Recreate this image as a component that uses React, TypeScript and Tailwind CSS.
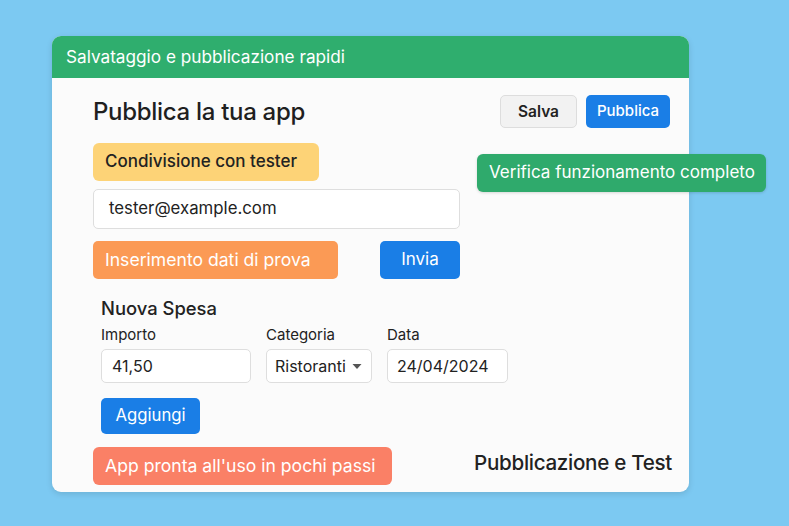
import React from "react";

export default function App() {
  return (
    <div
      className="w-[789px] h-[526px] bg-[#7cc9f2] pt-[36px] pl-[52px] overflow-hidden"
      style={{ fontFamily: "Inter, 'Noto Sans', sans-serif" }}
    >
      <div className="relative w-[637px] h-[456px] rounded-[9px] bg-[#fbfbfb] shadow-[0_2px_6px_rgba(0,0,0,0.12)]">
        <div className="h-[42px] rounded-t-[9px] bg-[#2fae6e] flex items-center pl-[14px] text-white text-[17.2px]">
          Salvataggio e pubblicazione rapidi
        </div>
        <div className="pl-[41px] pr-[19px] pt-[17px]">
          <div className="flex items-center justify-between h-[33px]">
            <div className="text-[24px] font-medium text-[#1f1f1f] tracking-[-0.3px]">Pubblica la tua app</div>
            <div className="flex gap-[9px]">
              <button className="w-[77px] h-[33px] rounded-[5px] bg-[#f2f2f2] border border-[#dddddd] text-[15.5px] font-semibold text-[#222]">
                Salva
              </button>
              <button className="w-[84px] h-[33px] rounded-[5px] bg-[#1a7ee6] text-[15px] font-medium text-white">
                Pubblica
              </button>
            </div>
          </div>
          <div className="mt-[15px] w-[226px] h-[38px] rounded-[6px] bg-[#fdd377] flex items-center pl-[12px] text-[17px] font-medium text-[#222]">
            Condivisione con tester
          </div>
          <div className="mt-[8px] w-[367px] h-[40px] rounded-[5px] bg-white border border-[#dedede] flex items-center pl-[15px] text-[16.8px] text-[#222]">
            tester@example.com
          </div>
          <div className="mt-[12px] flex items-center">
            <div className="w-[245px] h-[38px] rounded-[5px] bg-[#fb9a55] flex items-center pl-[12px] text-[17.6px] text-white">
              Inserimento dati di prova
            </div>
            <button className="ml-[42px] w-[80px] h-[38px] rounded-[5px] bg-[#1a7ee6] text-[17px] text-white">
              Invia
            </button>
          </div>
          <div className="pl-[8px]">
            <div className="mt-[17px] text-[18.4px] font-medium text-[#222] leading-[24px]">Nuova Spesa</div>
            <div className="mt-[6px] flex">
              <div className="w-[165px]">
                <div className="text-[15px] text-[#222] leading-[18px]">Importo</div>
                <div className="mt-[5px] w-[150px] h-[34px] rounded-[5px] bg-white border border-[#dedede] flex items-center pl-[10px] text-[16px] text-[#222]">
                  41,50
                </div>
              </div>
              <div className="w-[121px]">
                <div className="text-[15px] text-[#222] leading-[18px]">Categoria</div>
                <div className="mt-[5px] w-[106px] h-[34px] rounded-[5px] bg-white border border-[#dedede] flex items-center pl-[8px] text-[16px] text-[#222]">
                  Ristoranti
                  <svg width="10" height="7" viewBox="0 0 10 7" className="ml-[6px]">
                    <path d="M0.5 1 L9.5 1 L5 6 Z" fill="#555" />
                  </svg>
                </div>
              </div>
              <div>
                <div className="text-[15px] text-[#222] leading-[18px]">Data</div>
                <div className="mt-[5px] w-[121px] h-[34px] rounded-[5px] bg-white border border-[#dedede] flex items-center pl-[9px] text-[16px] text-[#222]">
                  24/04/2024
                </div>
              </div>
            </div>
            <button className="mt-[15px] w-[99px] h-[36px] rounded-[5px] bg-[#1a7ee6] text-[16.7px] text-white">
              Aggiungi
            </button>
          </div>
          <div className="mt-[13px] flex items-start justify-between">
            <div className="w-[299px] h-[38px] rounded-[6px] bg-[#fa8066] flex items-center pl-[12px] text-[17.6px] text-white">
              App pronta all'uso in pochi passi
            </div>
            <div className="mt-[2px] leading-[28px] text-[20.6px] font-medium text-[#222] tracking-[-0.3px] mr-[-2px]">Pubblicazione e Test</div>
          </div>
        </div>
        <div className="absolute left-[425px] top-[118px] w-[289px] h-[38px] rounded-[6px] bg-[#2faa6c] flex items-center pl-[12px] text-[17px] text-white shadow-[0_1px_3px_rgba(0,0,0,0.15)]">
          Verifica funzionamento completo
        </div>
      </div>
    </div>
  );
}
